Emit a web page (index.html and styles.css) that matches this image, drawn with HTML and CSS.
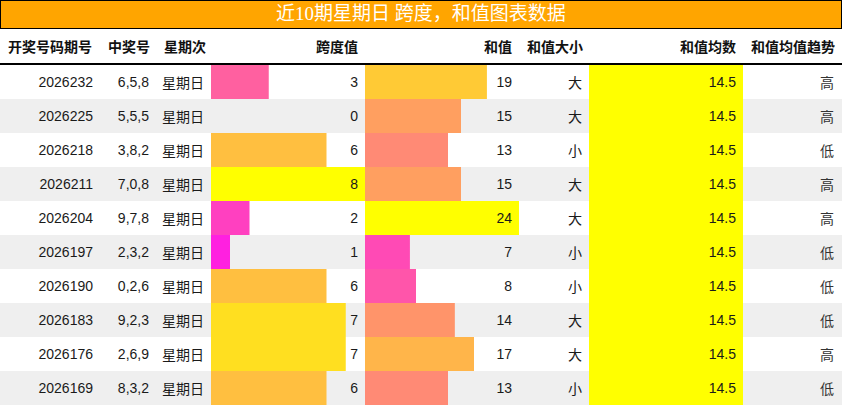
FILE: index.html
```html
<!DOCTYPE html>
<html lang="zh-CN">
<head>
<meta charset="utf-8">
<title>近10期星期日 跨度，和值图表数据</title>
<link rel="stylesheet" href="styles.css">
</head>
<body>
<div class="title">近10期星期日 跨度，和值图表数据</div>
<table class="data">
  <colgroup>
    <col class="c-issue"><col class="c-num"><col class="c-week"><col class="c-bar"><col class="c-bar"><col class="c-size"><col class="c-bar"><col class="c-trend">
  </colgroup>
  <thead>
    <tr>
      <th>开奖号码期号</th><th>中奖号</th><th>星期次</th><th>跨度值</th><th>和值</th><th>和值大小</th><th>和值均数</th><th>和值均值趋势</th>
    </tr>
  </thead>
  <tbody>
    <tr><td>2026232</td><td>6,5,8</td><td class="cjk">星期日</td><td class="bar" style="--w:37.5%;--c:#ff60a0">3</td><td class="bar" style="--w:79.17%;--c:#ffca35">19</td><td class="cjk">大</td><td class="bar" style="--w:100%;--c:#ffff00">14.5</td><td class="cjk trend">高</td></tr>
    <tr><td>2026225</td><td>5,5,5</td><td class="cjk">星期日</td><td class="bar" style="--w:0%;--c:#ff00ff">0</td><td class="bar" style="--w:62.5%;--c:#ff9f60">15</td><td class="cjk">大</td><td class="bar" style="--w:100%;--c:#ffff00">14.5</td><td class="cjk trend">高</td></tr>
    <tr><td>2026218</td><td>3,8,2</td><td class="cjk">星期日</td><td class="bar" style="--w:75%;--c:#ffbf40">6</td><td class="bar" style="--w:54.17%;--c:#ff8a75">13</td><td class="cjk">小</td><td class="bar" style="--w:100%;--c:#ffff00">14.5</td><td class="cjk trend">低</td></tr>
    <tr><td>2026211</td><td>7,0,8</td><td class="cjk">星期日</td><td class="bar" style="--w:100%;--c:#ffff00">8</td><td class="bar" style="--w:62.5%;--c:#ff9f60">15</td><td class="cjk">大</td><td class="bar" style="--w:100%;--c:#ffff00">14.5</td><td class="cjk trend">高</td></tr>
    <tr><td>2026204</td><td>9,7,8</td><td class="cjk">星期日</td><td class="bar" style="--w:25%;--c:#ff40c0">2</td><td class="bar" style="--w:100%;--c:#ffff00">24</td><td class="cjk">大</td><td class="bar" style="--w:100%;--c:#ffff00">14.5</td><td class="cjk trend">高</td></tr>
    <tr><td>2026197</td><td>2,3,2</td><td class="cjk">星期日</td><td class="bar" style="--w:12.5%;--c:#ff20e0">1</td><td class="bar" style="--w:29.17%;--c:#ff4ab5">7</td><td class="cjk">小</td><td class="bar" style="--w:100%;--c:#ffff00">14.5</td><td class="cjk trend">低</td></tr>
    <tr><td>2026190</td><td>0,2,6</td><td class="cjk">星期日</td><td class="bar" style="--w:75%;--c:#ffbf40">6</td><td class="bar" style="--w:33.33%;--c:#ff55aa">8</td><td class="cjk">小</td><td class="bar" style="--w:100%;--c:#ffff00">14.5</td><td class="cjk trend">低</td></tr>
    <tr><td>2026183</td><td>9,2,3</td><td class="cjk">星期日</td><td class="bar" style="--w:87.5%;--c:#ffdf20">7</td><td class="bar" style="--w:58.33%;--c:#ff946a">14</td><td class="cjk">大</td><td class="bar" style="--w:100%;--c:#ffff00">14.5</td><td class="cjk trend">低</td></tr>
    <tr><td>2026176</td><td>2,6,9</td><td class="cjk">星期日</td><td class="bar" style="--w:87.5%;--c:#ffdf20">7</td><td class="bar" style="--w:70.83%;--c:#ffb54a">17</td><td class="cjk">大</td><td class="bar" style="--w:100%;--c:#ffff00">14.5</td><td class="cjk trend">高</td></tr>
    <tr><td>2026169</td><td>8,3,2</td><td class="cjk">星期日</td><td class="bar" style="--w:75%;--c:#ffbf40">6</td><td class="bar" style="--w:54.17%;--c:#ff8a75">13</td><td class="cjk">小</td><td class="bar" style="--w:100%;--c:#ffff00">14.5</td><td class="cjk trend">低</td></tr>
  </tbody>
</table>
</body>
</html>
```
FILE: styles.css
```css
html, body {
  margin: 0;
  padding: 0;
  background: #ffffff;
}

body {
  width: 842px;
  font-family: "Liberation Sans", Arial, "Noto Sans CJK SC", sans-serif;
  color: #1a1a1a;
}

.title {
  box-sizing: border-box;
  height: 29px;
  border: 1px solid #000000;
  background: #ffa500;
  color: #ffffff;
  text-align: center;
  font-family: "Liberation Serif", "Noto Sans CJK SC", serif;
  font-size: 19px;
  line-height: 26px;
}

.data {
  width: 842px;
  border-collapse: collapse;
  border-spacing: 0;
  table-layout: fixed;
}

.c-issue { width: 100px; }
.c-num { width: 56px; }
.c-week { width: 55px; }
.c-bar { width: 154px; }
.c-size { width: 70px; }
.c-trend { width: 99px; }

.data th {
  height: 34px;
  padding: 0 7px 0 8px;
  text-align: right;
  font-family: "Noto Sans CJK SC", sans-serif;
  font-weight: bold;
  font-size: 14px;
  color: #111111;
  border-bottom: 2px solid #000000;
  white-space: nowrap;
  background: #ffffff;
}

.data th:first-child {
  text-align: left;
}

.data td {
  height: 34px;
  padding: 0 7px 0 0;
  text-align: right;
  font-size: 14px;
  white-space: nowrap;
}

.data tbody tr:nth-child(odd) {
  background: #ffffff;
}

.data tbody tr:nth-child(even) {
  background: #efefef;
}

.data td.cjk {
  font-family: "Noto Sans CJK SC", sans-serif;
}

.data td.trend {
  color: #333333;
  padding-right: 8px;
}

.data td.bar {
  background-image: linear-gradient(var(--c), var(--c));
  background-repeat: no-repeat;
  background-position: 0 0;
  background-size: var(--w) 100%;
}
```
